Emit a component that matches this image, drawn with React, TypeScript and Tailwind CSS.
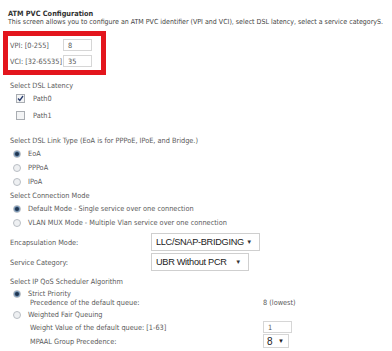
const Radio = ({ checked }: { checked?: boolean }) => (
  <span className="inline-flex w-[8px] h-[8px] rounded-full border border-[#b9bec4] bg-[#eef0f2] items-center justify-center shrink-0">
    {checked && <span className="w-[4px] h-[4px] rounded-full bg-[#1f3550] ring-1 ring-[#6f8fb0]" />}
  </span>
);

const Check = ({ checked }: { checked?: boolean }) => (
  <span className="inline-flex w-[9px] h-[9px] border border-[#a9adb2] bg-[#f3f4f5] items-center justify-center shrink-0">
    {checked && (
      <svg width="7" height="7" viewBox="0 0 7 7">
        <path d="M1 3.5 L2.8 5.5 L6 1" stroke="#2a3d6e" strokeWidth="1.3" fill="none" />
      </svg>
    )}
  </span>
);

const Select = ({ value, width }: { value: string; width: string }) => (
  <div className={`${width} h-[18px] border border-[#cfcfcf] bg-white flex items-center justify-between pl-[4px] pr-[7px] whitespace-nowrap font-['Liberation_Sans',Arial,sans-serif] text-[9.2px] tracking-[-0.3px] text-[#222]`}>
    <span>{value}</span>
    <span className="text-[6px] text-[#333]">▼</span>
  </div>
);

const Input = ({ value, width }: { value: string; width: string }) => (
  <div className={`${width} h-[12px] border border-[#d6d6d6] bg-white flex items-center pl-[4px] text-[#555]`}>
    {value}
  </div>
);

export default function App() {
  return (
    <div className="w-[392px] h-[351px] overflow-hidden bg-white pl-[8px] pt-[9px] text-[7.3px] leading-[9px] text-[#5a5a5a] font-['DejaVu_Sans_Condensed','DejaVu_Sans',sans-serif]">
      <div className="font-bold text-[#333] text-[7.3px]">ATM PVC Configuration</div>
      <div className="text-[#444] text-[7px] whitespace-nowrap">
        This screen allows you to configure an ATM PVC identifier (VPI and VCI), select DSL latency, select a service categoryS.
      </div>

      <div className="mt-[4px] -ml-[5px] w-[103px] border-[5px] border-[#e3151d] pt-[3px] pb-[3px] pl-[2px] flex flex-col gap-[4px]">
        <div className="flex items-center">
          <span className="w-[53px] whitespace-nowrap">VPI: [0-255]</span>
          <Input value="8" width="w-[29px]" />
        </div>
        <div className="flex items-center">
          <span className="w-[53px] whitespace-nowrap">VCI: [32-65535]</span>
          <Input value="35" width="w-[29px]" />
        </div>
      </div>

      <div className="pl-[2px] whitespace-nowrap">
        <div className="mt-[6px]">Select DSL Latency</div>
        <div className="mt-[4px] pl-[6px] flex flex-col gap-[8px]">
          <div className="flex items-center gap-[8px]"><Check checked /><span>Path0</span></div>
          <div className="flex items-center gap-[8px]"><Check /><span>Path1</span></div>
        </div>

        <div className="mt-[16px]">Select DSL Link Type (EoA is for PPPoE, IPoE, and Bridge.)</div>
        <div className="mt-[4px] pl-[3px] flex flex-col gap-[5px]">
          <div className="flex items-center gap-[7px]"><Radio checked /><span>EoA</span></div>
          <div className="flex items-center gap-[7px]"><Radio /><span>PPPoA</span></div>
          <div className="flex items-center gap-[7px]"><Radio /><span>IPoA</span></div>
        </div>

        <div className="mt-[5px]">Select Connection Mode</div>
        <div className="mt-[4px] pl-[3px] flex flex-col gap-[5px]">
          <div className="flex items-center gap-[7px]"><Radio checked /><span>Default Mode - Single service over one connection</span></div>
          <div className="flex items-center gap-[7px]"><Radio /><span>VLAN MUX Mode - Multiple Vlan service over one connection</span></div>
        </div>

        <div className="mt-[6px] grid grid-cols-[141px_auto] items-center gap-y-[2px]">
          <span>Encapsulation Mode:</span>
          <Select value="LLC/SNAP-BRIDGING" width="w-[109px]" />
          <span>Service Category:</span>
          <Select value="UBR Without PCR" width="w-[98px]" />
        </div>

        <div className="mt-[6px]">Select IP QoS Scheduler Algorithm</div>
        <div className="mt-[3px] pl-[3px] flex flex-col">
          <div className="flex items-center gap-[7px]"><Radio checked /><span>Strict Priority</span></div>
          <div className="grid grid-cols-[233px_auto] pl-[17px]">
            <span>Precedence of the default queue:</span>
            <span>8 (lowest)</span>
          </div>
          <div className="mt-[3px] flex items-center gap-[7px]"><Radio /><span>Weighted Fair Queuing</span></div>
          <div className="grid grid-cols-[233px_auto] pl-[17px] items-center gap-y-[1px] mt-[2px]">
            <span>Weight Value of the default queue: [1-63]</span>
            <Input value="1" width="w-[29px]" />
            <span>MPAAL Group Precedence:</span>
            <div className="w-[26px] h-[14px] border border-[#d6d6d6] flex items-center justify-between pl-[3px] pr-[4px] font-['Liberation_Sans',Arial,sans-serif] text-[10px] text-[#222]">
              <span>8</span><span className="text-[6px]">▼</span>
            </div>
          </div>
        </div>
      </div>
    </div>
  );
}
